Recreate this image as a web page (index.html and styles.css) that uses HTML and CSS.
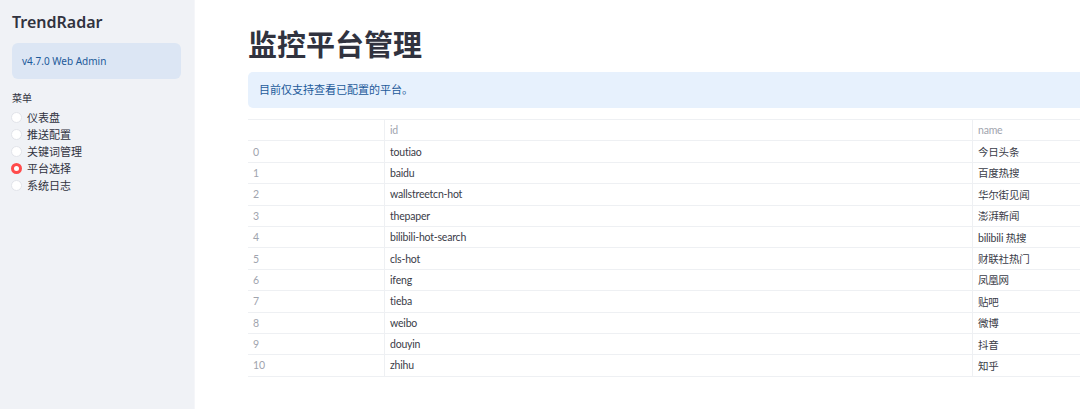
FILE: index.html
```html
<html>
    <head>
        <link rel="stylesheet" href="styles.css">
        <meta charset="utf-8">
        <title>TrendRadar</title>
    </head>
    <body>
        <aside class="sidebar">
            <h2 class="brand">TrendRadar</h2>
            <div class="side-note">v4.7.0 Web Admin</div>
            <p class="menu-label">菜单</p>
            <ul class="menu">
                <li><span class="radio"></span>仪表盘</li>
                <li><span class="radio"></span>推送配置</li>
                <li><span class="radio"></span>关键词管理</li>
                <li class="active"><span class="radio"></span>平台选择</li>
                <li><span class="radio"></span>系统日志</li>
            </ul>
        </aside>
        <main class="content">
            <h1 class="page-title">监控平台管理</h1>
            <div class="notice">目前仅支持查看已配置的平台。</div>
            <table class="grid">
                <thead>
                    <tr><th class="idx"></th><th class="col-id">id</th><th class="col-name">name</th></tr>
                </thead>
                <tbody>
                    <tr><td class="idx">0</td><td>toutiao</td><td>今日头条</td></tr>
                    <tr><td class="idx">1</td><td>baidu</td><td>百度热搜</td></tr>
                    <tr><td class="idx">2</td><td>wallstreetcn-hot</td><td>华尔街见闻</td></tr>
                    <tr><td class="idx">3</td><td>thepaper</td><td>澎湃新闻</td></tr>
                    <tr><td class="idx">4</td><td>bilibili-hot-search</td><td>bilibili 热搜</td></tr>
                    <tr><td class="idx">5</td><td>cls-hot</td><td>财联社热门</td></tr>
                    <tr><td class="idx">6</td><td>ifeng</td><td>凤凰网</td></tr>
                    <tr><td class="idx">7</td><td>tieba</td><td>贴吧</td></tr>
                    <tr><td class="idx">8</td><td>weibo</td><td>微博</td></tr>
                    <tr><td class="idx">9</td><td>douyin</td><td>抖音</td></tr>
                    <tr><td class="idx">10</td><td>zhihu</td><td>知乎</td></tr>
                </tbody>
            </table>
        </main>
    </body>
</html>
```

FILE: styles.css
```css
html {padding: 0;}
body {
    font-family: Lato, "Noto Sans CJK SC", sans-serif;
    color: #31333f;
    margin: 0;
    padding: 0;
    display: flex;
    height: 409px;
    overflow: hidden;
    background: #ffffff;
}

.sidebar {
    width: 195px;
    flex-shrink: 0;
    background: #f0f2f6;
    padding: 10px 13px 0 12px;
    box-sizing: border-box;
    border-right: 1px solid #f5f6f9;
}
.brand {font-size: 16px; font-weight: 600; line-height: 24px; margin: 0 0 9px 0; font-family: "Noto Sans", sans-serif;}
.side-note {
    background: #dce6f4;
    color: #1c5a9a;
    font-size: 10px;
    border-radius: 6px;
    height: 36px;
    line-height: 36px;
    padding: 0 10px;
    font-family: "Noto Sans", sans-serif;
}
.menu-label {font-size: 10px; margin: 12px 0 4px 0; line-height: 14px;}
.menu {list-style: none; margin: 0; padding: 0;}
.menu li {display: flex; align-items: center; height: 16.9px; font-size: 11px;}
.radio {
    width: 11px;
    height: 11px;
    border-radius: 50%;
    background: #ffffff;
    border: 1px solid #e2e4ea;
    margin: 0 5px 0 -1px;
    box-sizing: border-box;
}
.menu li.active .radio {background: #ffffff; border: 3.5px solid #ff4b4b;}

.content {
    flex: 1;
    overflow: hidden;
    padding: 24px 0 0 53px;
}
.page-title {font-size: 29px; font-weight: 700; line-height: 38px; margin: 0 0 10px 0; font-family: "Noto Sans CJK SC", sans-serif;}
.notice {
    width: 900px;
    background: #e7f1fd;
    color: #1c5a9a;
    font-size: 11px;
    height: 36px;
    line-height: 36px;
    padding: 0 11px;
    border-radius: 5px;
    margin-bottom: 11px;
}

.grid {border-collapse: collapse; width: 1000px; font-size: 10.5px; letter-spacing: -0.2px; table-layout: fixed;}
.grid tr {height: 21.4px;}
.grid th, .grid td {
    padding: 0 5px;
    text-align: left;
    font-weight: 400;
    border-top: 1px solid #eef0f3;
    border-bottom: 1px solid #eef0f3;
    white-space: nowrap;
}
.grid th {color: #a0a4ae;}
.grid td {color: #3a3c48;}
.grid .idx {width: 126px; color: #a0a4ae; border-right: 1px solid #eef0f3;}
.grid .col-id {width: 577px; border-right: 1px solid #eef0f3;}
.grid td:nth-child(2) {border-right: 1px solid #eef0f3;}
```
